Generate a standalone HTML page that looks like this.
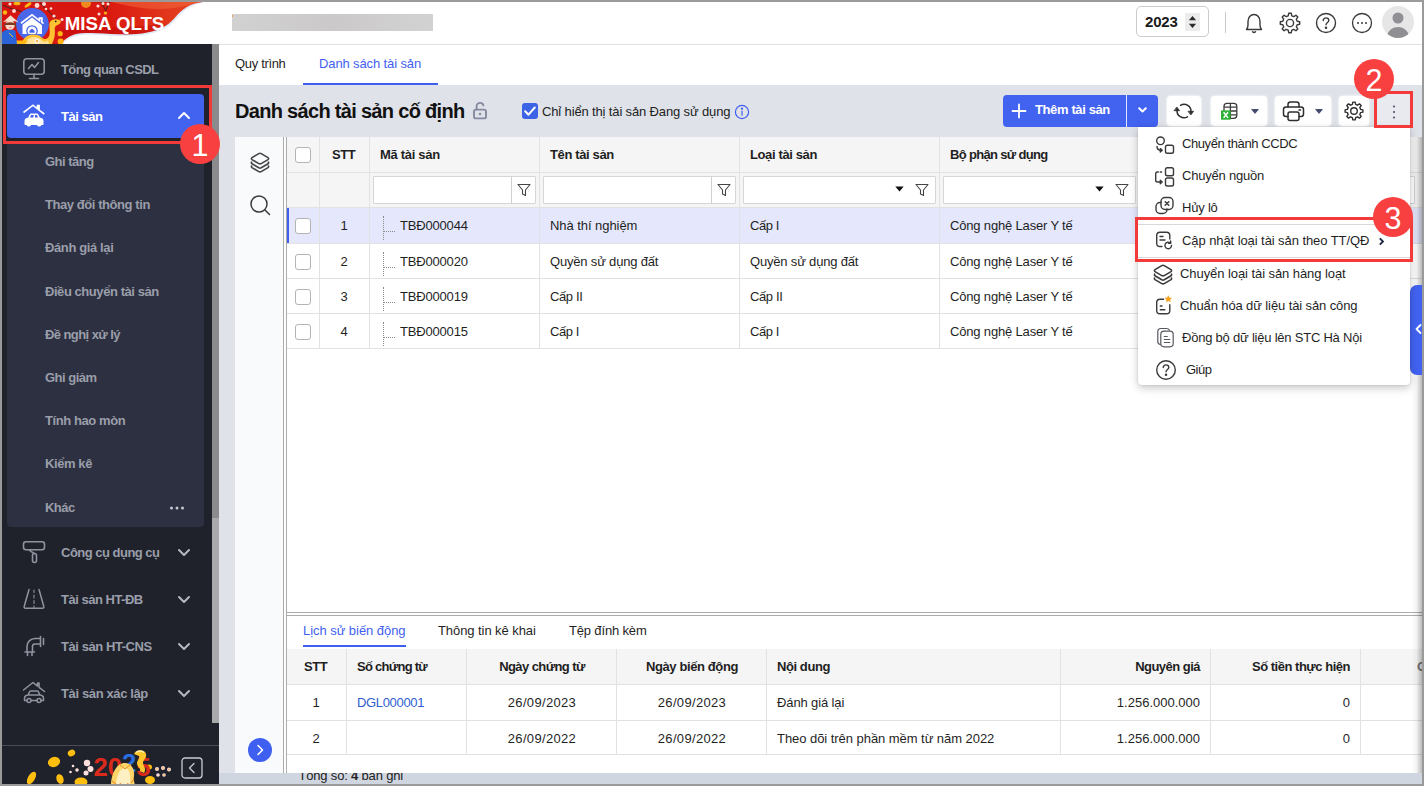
<!DOCTYPE html>
<html lang="vi">
<head>
<meta charset="utf-8">
<title>MISA QLTS - Danh sách tài sản</title>
<style>
*{box-sizing:border-box;margin:0;padding:0}
html,body{width:1424px;height:786px;overflow:hidden;background:#e0e2ea;font-family:"Liberation Sans",Arial,sans-serif;font-size:13px;color:#1f1f1f}
.abs,.a{position:absolute}
.a{white-space:nowrap}
svg{position:absolute;overflow:visible}
/* sidebar */
#side{position:absolute;left:0;top:44px;width:212px;height:742px;background:#1f222b}
#sbar{position:absolute;left:212px;top:44px;width:7px;height:742px;background:#1f222b}
#sbar i{position:absolute;left:0;top:0;width:7px;height:679px;background:linear-gradient(180deg,#8b8b8d 0,#8b8b8d 474px,#a9a9ab 474px,#a9a9ab 100%);display:block}
#logo{position:absolute;left:0;top:0;width:219px;height:44px;overflow:hidden;background:#fff}
.mi{position:absolute;margin-top:1px;left:61px;color:#9a9eaa;font-weight:bold;font-size:13px;white-space:nowrap;line-height:16px}
#sub{position:absolute;left:7px;top:141px;width:197px;height:386px;background:#2d3040;border-radius:0 0 4px 4px}
.si{position:absolute;margin-top:1px;left:45px;color:#9a9eaa;font-weight:bold;font-size:13px;white-space:nowrap;line-height:16px}
#active{position:absolute;left:7px;top:94px;width:197px;height:44px;background:#4262f0;border-radius:4px}
/* header */
#head{position:absolute;left:219px;top:0;width:1205px;height:45px;background:#fff;border-bottom:1px solid #e0e0e0}
#tabs{position:absolute;left:219px;top:45px;width:1205px;height:40px;background:#fff}

/* main */
.btn{position:absolute;top:96px;height:30px;background:#fff;border-radius:4px;box-shadow:0 0 2px 1px rgba(255,255,255,.55)}
.panel{position:absolute;background:#fff}
.hl{position:absolute;height:1px;background:#e2e2e2}
.vl{position:absolute;width:1px;background:#e2e2e2}
.th{position:absolute;font-weight:bold;font-size:13px;line-height:16px;white-space:nowrap;color:#1f1f1f}
.td{position:absolute;font-size:13px;line-height:16px;white-space:nowrap;color:#1f1f1f}
.cb{position:absolute;width:16px;height:16px;border:1px solid #b4b4b4;border-radius:3px;background:#fff}
.fi{position:absolute;top:176px;height:28px;border:1px solid #d6d6d6;border-radius:1px;background:#fff}
.td.g{margin-top:1px}
.dot-v{position:absolute;width:0;border-left:1px dotted #8a8a8a}
.dot-h{position:absolute;height:0;border-top:1px dotted #8a8a8a}

.mt{position:absolute;margin-top:1px;font-size:13px;line-height:16px;white-space:nowrap;color:#1f1f1f}
/* red marks */
.rbox{position:absolute;border:3px solid #f23a3a}
.badge{position:absolute;width:40px;height:40px;border-radius:50%;background:#f7403f;color:#fff;font-size:30.500px;text-align:center;line-height:43px}
#frame{position:absolute;left:0;top:0;width:1424px;height:786px;border:2px solid #9a9a9a;pointer-events:none}
</style>
</head>
<body>
<!-- HEADER -->
<div id="head">
  <div class="abs" style="left:13px;top:14px;width:201px;height:17px;background:linear-gradient(90deg,#d2d1d2,#cbc9ca 50%,#d3d2d3)"></div><div class="abs" style="left:13px;top:15px;width:1px;height:2px;background:#f0a040"></div>
</div>
<div id="tabs">
  <div class="a" style="left:16px;top:11px;font-size:13px;line-height:16px;letter-spacing:-0.33px">Quy trình</div>
  <div class="a" style="left:100px;top:11px;font-size:13px;line-height:16px;color:#3f5ff0;letter-spacing:-0.12px">Danh sách tài sản</div>
  <div class="abs" style="left:84px;top:38px;width:135px;height:2px;background:#3f5ff0"></div>
</div>

<div class="abs" style="left:1136px;top:6px;width:73px;height:31px;border:1px solid #cbcbcb;border-radius:5px;background:#fff"></div>
<div class="a" style="left:1145px;top:13px;font-size:15px;line-height:18px;font-weight:bold;color:#1a1a1a;letter-spacing:-.2px">2023</div>
<div class="abs" style="left:1185px;top:13px;width:15px;height:18px;background:#ececec"></div>
<svg style="left:1185px;top:13px" width="15" height="18" viewBox="0 0 15 18" fill="#2b2b2b"><path d="M7.500 3l3.600 4.200H3.900zM7.500 15l3.600-4.200H3.900z"/></svg>
<div class="abs" style="left:1225px;top:12px;width:1px;height:21px;background:#c9c9c9"></div>
<svg style="left:1243px;top:12px" width="22" height="22" viewBox="0 0 22 22" fill="none" stroke="#3a3a3a" stroke-width="1.400" stroke-linecap="round" stroke-linejoin="round"><path d="M3.500 17.500c1-1.300 1.500-2.800 1.500-4.500V9.500C5 5.500 7.500 2.500 11 2.500s6 3 6 7V13c0 1.700.5 3.200 1.500 4.500zM9.500 19.800c.8.700 2.200.7 3 0"/></svg>
<svg style="left:1278px;top:11px" width="24" height="24" viewBox="0 0 24 24" fill="none" stroke="#3a3a3a" stroke-width="1.400" stroke-linejoin="round"><path d="M10.22 4.82L10.70 2.29L13.30 2.29L13.78 4.82L15.82 5.66L17.95 4.21L19.79 6.05L18.34 8.18L19.18 10.22L21.71 10.70L21.71 13.30L19.18 13.78L18.34 15.82L19.79 17.95L17.95 19.79L15.82 18.34L13.78 19.18L13.30 21.71L10.70 21.71L10.22 19.18L8.18 18.34L6.05 19.79L4.21 17.95L5.66 15.82L4.82 13.78L2.29 13.30L2.29 10.70L4.82 10.22L5.66 8.18L4.21 6.05L6.05 4.21L8.18 5.66z"/><circle cx="12" cy="12" r="3.600"/></svg>
<svg style="left:1315px;top:12px" width="22" height="22" viewBox="0 0 22 22" fill="none" stroke="#3a3a3a" stroke-width="1.400" stroke-linecap="round"><circle cx="11" cy="11" r="9.500"/><path d="M8.200 8.600c0-1.600 1.200-2.700 2.800-2.700s2.800 1.100 2.800 2.500c0 2-2.800 2.100-2.800 4.300"/><circle cx="11" cy="15.800" r=".6" fill="#3a3a3a"/></svg>
<svg style="left:1351px;top:12px" width="22" height="22" viewBox="0 0 22 22" fill="none" stroke="#3a3a3a" stroke-width="1.300"><circle cx="11" cy="11" r="9.500"/><g fill="#3a3a3a" stroke="none"><circle cx="7" cy="11" r="1"/><circle cx="11" cy="11" r="1"/><circle cx="15" cy="11" r="1"/></g></svg>
<svg style="left:1382px;top:6px" width="32" height="32" viewBox="0 0 32 32"><defs><clipPath id="av"><circle cx="16" cy="16" r="16"/></clipPath></defs><circle cx="16" cy="16" r="16" fill="#e6e6e6"/><g clip-path="url(#av)" fill="#8f8f94"><circle cx="16" cy="12" r="5.500"/><path d="M5 32c0-7 5-11 11-11s11 4 11 11z"/></g></svg>

<!-- SIDEBAR -->
<div id="logo"><svg style="left:0;top:0" width="219" height="44" viewBox="0 0 219 44">
<defs><linearGradient id="lg" x1="0" y1="0" x2="1" y2="0"><stop offset="0" stop-color="#d41410"/><stop offset=".5" stop-color="#da1a10"/><stop offset=".8" stop-color="#e23a1e"/><stop offset="1" stop-color="#ec5030"/></linearGradient></defs>
<rect width="219" height="44" fill="url(#lg)"/>
<path d="M60 30C80 26 120 30 160 24L170 25 150 36 60 38z" fill="#c20d0c" opacity=".55"/>
<path d="M112 2C135 8 160 12 185 6L200 2z" fill="#f2683c" opacity=".55"/>
<path d="M60.500 44C65 39 71 34 81 33.200C95 32.300 105 33.600 118 34.300C130 34.800 140 34 146 32.800C156 31 163 28 169 23.500C175 18.500 179 12 185 8.300C190 5 195 3 203 2L219 2V44z" fill="#dfeaf8"/>
<path d="M62.500 44C66.500 40 72.500 35.800 82 34.900C95 34.100 105 35.300 118 36C130 36.500 140 35.800 146 34.500C156 32.800 164 29.800 170 25.300C176 20.300 180 13.500 186 9.800C191 6.300 196 3.800 205 2L219 2V44z" fill="#fff"/>
<path d="M3 5C9 9 16 9 22 12M40 3C46 8 50 14 56 18M101 2l5 9M109.500 2l-4 9" stroke="#3a2320" stroke-width=".9" fill="none"/>
<g fill="#ffd9d2"><circle cx="10" cy="4" r="1.600"/><circle cx="14" cy="11" r="2"/><circle cx="37" cy="5.500" r="2.400"/><circle cx="44" cy="4" r="2"/><circle cx="46" cy="9" r="1.300"/><circle cx="51" cy="8.500" r="1.300"/><circle cx="54" cy="16" r="1.600"/><circle cx="62" cy="19.500" r="1.500"/><circle cx="98" cy="6" r="1.600"/><circle cx="103" cy="3.500" r="1.500"/><circle cx="108" cy="4" r="1.500"/><circle cx="99" cy="14" r="1.500"/></g>
<g fill="#ffb413"><ellipse cx="17" cy="3.500" rx="3.500" ry="1.800"/><ellipse cx="28" cy="5" rx="4" ry="1.500" transform="rotate(-35 28 5)"/><circle cx="5" cy="12.500" r="2.200"/><circle cx="105.500" cy="13" r="1.600"/><circle cx="60.200" cy="33.700" r="2.600"/><circle cx="60.600" cy="41.500" r="3"/><circle cx="22" cy="31.500" r="1.400"/></g>
<circle cx="86" cy="3" r="5" fill="#f08a1c"/>
<circle cx="32.400" cy="24.300" r="16.400" fill="#4967e8"/>
<path d="M21 23.300L32 14.900l7.500 5.700v-2.400h2.400v4.200l1.600 1.200" fill="none" stroke="#fff" stroke-width="1.700"/>
<path d="M22.500 24.800L32 17.600l10 7.600V34h-19.500z" fill="#fff"/>
<circle cx="32" cy="31" r="5.200" fill="none" stroke="#4967e8" stroke-width="1.300"/>
<path d="M32 28.400l2.600 2.400v2h-5.200v-2z" fill="#4967e8"/>
<!-- snake -->
<path d="M23 40C27 34 36 33 41 37C44 40 48 40 49.500 35C50.500 30 48.500 25 50 22C51.500 19 56 18.500 59.500 20C61.500 21 61 23.500 58.500 24.500C56 25.500 54.500 26.500 54.800 30C55 34 55 38 52 44H22z" fill="#ffc233"/>
<path d="M26 41C30 36 37 36 41 39.500C43 42 46 42.500 48 40L49 44H25z" fill="#ffe29a"/>
<circle cx="55.700" cy="21.300" r=".9" fill="#1a1a1a"/>
<path d="M11 40.500L28 40.500 25 44 13.500 44z" fill="#ffb90f"/>
<circle cx="37" cy="41" r="2.600" fill="#fff1e0"/><circle cx="37" cy="41" r="1" fill="#f59a1b"/>
<!-- girl -->
<path d="M2 33C4 29 12 28.500 15.500 31L17 44H2z" fill="#2b63d9"/>
<path d="M9 33l4 4" stroke="#f4c11a" stroke-width="1"/>
<circle cx="10" cy="25" r="4.800" fill="#ffd9c6"/>
<path d="M4.200 24.500C5 21.500 15 21.500 16 24.500L16.500 29 14.500 25 5.500 25 4 29z" fill="#7a3b22"/>
<path d="M3 22.200L10.500 15.200l8 7C14 20.600 7 20.800 3 22.200z" fill="#f6dfce"/>
<path d="M8.800 27.300c1 .9 2.200.9 3.200 0z" fill="#e04545"/>
<text x="64.800" y="29.600" font-family="Liberation Sans, Arial, sans-serif" font-weight="bold" font-size="18.500" fill="#fff" textLength="99.500" lengthAdjust="spacingAndGlyphs">MISA QLTS</text>
</svg></div>
<div id="side"></div>
<div id="sbar"><i></i></div>
<div id="sub"></div>
<div id="active"></div>

<!-- Tổng quan -->
<svg style="left:22px;top:57px" width="24" height="24" viewBox="0 0 24 24" fill="none" stroke="#8f939d" stroke-width="1.6" stroke-linecap="round" stroke-linejoin="round"><rect x="1.8" y="1.8" width="20.4" height="15.4" rx="3"/><path d="M12 17.2v4M7.5 21.5h9M6.5 11.5l3.5-4 2.5 3 4-5"/></svg>
<div class="mi" style="top:61px;letter-spacing:-0.57px">Tổng quan CSDL</div>
<!-- active Tài sản -->
<svg style="left:22px;top:104px" width="24" height="24" viewBox="0 0 24 24"><path d="M1.5 8.5L11 1.2l4.5 3.6V1.6h1.6v4.5L22.3 10" fill="none" stroke="#fff" stroke-width="1.6" stroke-linejoin="miter"/><path d="M6.2 13.6l1.5-3.2c.3-.6.8-.9 1.500-.9h5.600c.7 0 1.200.3 1.500.9l1.500 3.200c2 .3 3.700 1.500 3.700 3.300v3c0 .6-.4 1-1 1h-1.100a2.300 2.300 0 0 1-4.400 0H9a2.300 2.300 0 0 1-4.400 0H3.500c-.6 0-1-.4-1-1v-3c0-1.800 1.700-3 3.700-3.300zM9 11l-1 2.400h3.500V11zm4 0v2.400h3L15 11z" fill="#fff" fill-rule="evenodd"/></svg>
<div class="mi" style="top:108px;color:#fff;letter-spacing:-0.47px">Tài sản</div>
<svg style="left:177px;top:110px" width="14" height="10" viewBox="0 0 14 10" fill="none" stroke="#fff" stroke-width="2" stroke-linecap="round" stroke-linejoin="round"><path d="M2 8l5-5 5 5"/></svg>
<!-- sub items -->
<div class="si" style="top:153px;letter-spacing:-0.51px">Ghi tăng</div>
<div class="si" style="top:196px;letter-spacing:-0.43px">Thay đổi thông tin</div>
<div class="si" style="top:239px;letter-spacing:-0.38px">Đánh giá lại</div>
<div class="si" style="top:283px;letter-spacing:-0.44px">Điều chuyển tài sản</div>
<div class="si" style="top:326px;letter-spacing:-0.58px">Đề nghị xử lý</div>
<div class="si" style="top:369px;letter-spacing:-0.5px">Ghi giảm</div>
<div class="si" style="top:412px;letter-spacing:-0.42px">Tính hao mòn</div>
<div class="si" style="top:455px;letter-spacing:-0.41px">Kiểm kê</div>
<div class="si" style="top:499px;letter-spacing:-0.52px">Khác</div>
<svg style="left:169px;top:506px" width="16" height="4" viewBox="0 0 16 4" fill="#c5c8d2"><circle cx="2.5" cy="2" r="1.5"/><circle cx="8" cy="2" r="1.5"/><circle cx="13.5" cy="2" r="1.500"/></svg>
<!-- other menus -->
<svg style="left:22px;top:540px" width="24" height="24" viewBox="0 0 24 24" fill="none" stroke="#8f939d" stroke-width="1.600" stroke-linecap="round" stroke-linejoin="round"><rect x="1.500" y="1.800" width="21" height="8" rx="2.500"/><path d="M7 9.800c1.500 1.500 3 2.500 5 3.500"/><rect x="10.500" y="13.500" width="4" height="9" rx="2"/></svg>
<div class="mi" style="top:544px;letter-spacing:-0.51px">Công cụ dụng cụ</div>
<svg style="left:22px;top:587px" width="24" height="24" viewBox="0 0 24 24" fill="none" stroke="#8f939d" stroke-width="1.500" stroke-linecap="round" stroke-linejoin="round"><path d="M7 2.500L2.200 19.500c-.3 1 .3 1.800 1.300 1.800h17c1 0 1.600-.8 1.300-1.800L17 2.500"/><path d="M12 3v2.500M12 8v3M12 13.500v3M12 19v1.500" stroke-width="1.100"/></svg>
<div class="mi" style="top:591px;letter-spacing:-0.49px">Tài sản HT-ĐB</div>
<svg style="left:22px;top:634px" width="24" height="24" viewBox="0 0 24 24" fill="none" stroke="#8f939d" stroke-width="1.600" stroke-linecap="round" stroke-linejoin="round"><path d="M18.500 4.500h-5.500c-4.500 0-8 3.500-8 8v5.500h5.500v-5.500c0-1.500 1-2.500 2.500-2.500h5.500zM18.500 2.500v10M21.500 4.500v6M3 18h9.500M5.500 18v3.500M10 18v3.500"/></svg>
<div class="mi" style="top:638px;letter-spacing:-0.43px">Tài sản HT-CNS</div>
<svg style="left:22px;top:681px" width="24" height="24" viewBox="0 0 24 24" fill="none" stroke="#8f939d" stroke-width="1.500" stroke-linecap="round" stroke-linejoin="round"><path d="M1.500 9L11 1.500l4.500 3.600V2h1.600v4.400L22.500 10.500"/><path d="M6 14l1.700-3.300c.3-.5.700-.7 1.200-.7h6.200c.5 0 .9.200 1.200.7L18 14c2 .3 3.500 1.300 3.500 3v2.500h-2.300M4.800 19.500H2.500V17c0-1.700 1.500-2.700 3.500-3h12M9.200 19.500h5.600"/><circle cx="7" cy="19.500" r="2"/><circle cx="17" cy="19.500" r="2"/></svg>
<div class="mi" style="top:685px;letter-spacing:-0.37px">Tài sản xác lập</div>
<svg style="left:177px;top:548px" width="14" height="10" viewBox="0 0 14 10" fill="none" stroke="#b5b8c2" stroke-width="2" stroke-linecap="round" stroke-linejoin="round"><path d="M2 2l5 5 5-5"/></svg>
<svg style="left:177px;top:595px" width="14" height="10" viewBox="0 0 14 10" fill="none" stroke="#b5b8c2" stroke-width="2" stroke-linecap="round" stroke-linejoin="round"><path d="M2 2l5 5 5-5"/></svg>
<svg style="left:177px;top:642px" width="14" height="10" viewBox="0 0 14 10" fill="none" stroke="#b5b8c2" stroke-width="2" stroke-linecap="round" stroke-linejoin="round"><path d="M2 2l5 5 5-5"/></svg>
<svg style="left:177px;top:689px" width="14" height="10" viewBox="0 0 14 10" fill="none" stroke="#b5b8c2" stroke-width="2" stroke-linecap="round" stroke-linejoin="round"><path d="M2 2l5 5 5-5"/></svg>
<!-- sidebar footer -->
<div class="abs" style="left:2px;top:745px;width:217px;height:1px;background:#4a4d58"></div>
<svg style="left:0;top:746px" width="212" height="40" viewBox="0 746 212 40">
<g fill="#ffbe0d"><ellipse cx="54" cy="762" rx="6.200" ry="5" transform="rotate(-20 54 762)"/><ellipse cx="71.500" cy="753" rx="3.800" ry="3.200" transform="rotate(-30 71.500 753)"/><ellipse cx="31.500" cy="778" rx="3.500" ry="7" transform="rotate(30 31.500 778)"/><ellipse cx="60" cy="779" rx="3.500" ry="5" transform="rotate(-20 60 779)"/><ellipse cx="81" cy="782" rx="6.500" ry="4.500"/><ellipse cx="150" cy="780" rx="5" ry="4"/><ellipse cx="149" cy="767" rx="3" ry="2.500"/></g>
<g fill="#ffe0dd"><circle cx="87" cy="763" r="3.200"/><circle cx="90.500" cy="769" r="3"/><circle cx="86" cy="773" r="2.500"/><circle cx="77" cy="770" r="1.800"/><circle cx="73" cy="766" r="1.300"/><circle cx="70.500" cy="772" r="1.300"/><circle cx="157" cy="769" r="2"/><circle cx="163" cy="768" r="2"/><circle cx="169" cy="769.500" r="2"/><circle cx="158" cy="775" r="1.800"/><circle cx="164" cy="775" r="1.800"/></g>
<g fill="#f0a51a"><circle cx="157" cy="769" r=".8"/><circle cx="163" cy="768" r=".8"/><circle cx="169" cy="769.500" r=".8"/><circle cx="164" cy="775" r=".8"/></g>
<text x="93.500" y="776" font-family="Liberation Sans, Arial, sans-serif" font-weight="bold" font-size="25" textLength="57" lengthAdjust="spacingAndGlyphs"><tspan fill="#d92a1c">20</tspan><tspan fill="#2a6de0" dy="-4">2</tspan><tspan fill="#d92a1c" dy="4">5</tspan></text>
<path d="M111 786C111 773 117 763 125 763C131 763 135 769 134 776C133 780 135 783 135 786z" fill="#ffd56a"/><path d="M116 786C116 776 120 768 125 768C129 768 131 774 130 786z" fill="#fff0c4"/><path d="M112 781l4 3M134 779l-3 4M120 783l2 3M128 783l-1 3" stroke="#ef7d1a" stroke-width="1" fill="none"/>
<path d="M119 764l6 5 6-5" stroke="#e08a1a" stroke-width="1" fill="none"/>
<path d="M134 754c2-5 11-5 12 0c1 4-3 6-3 9c0 3 4 5 1 10l-4-2c1-3-3-4-3-8c0-3 3-4 2-7z" fill="#ffc72e"/>
<path d="M136 752.500c2-2 6-2 8 0" stroke="#fff0b0" stroke-width="1.500" fill="none"/>
</svg>
<svg style="left:181px;top:757px" width="22" height="22" viewBox="0 0 22 22" fill="none" stroke="#c9ccd4" stroke-width="1.300" stroke-linecap="round" stroke-linejoin="round"><rect x="1" y="1" width="20" height="20" rx="3"/><path d="M13 6.500L8.500 11l4.500 4.500"/></svg>


<!-- title row -->
<div class="a" style="left:235px;top:98px;font-size:20px;line-height:26px;font-weight:bold;color:#111;letter-spacing:-0.69px">Danh sách tài sản cố định</div>
<svg style="left:472px;top:101px" width="16" height="19" viewBox="0 0 16 19" fill="none" stroke="#858a9e" stroke-width="1.900" stroke-linecap="round"><rect x="2" y="8.600" width="12" height="8.800" rx="2"/><path d="M4.600 8.500V5.400c0-2 1.500-3.500 3.400-3.500 1.700 0 3 1 3.400 2.500"/><circle cx="8" cy="13" r=".7" fill="#858a9e" stroke-width="1.200"/></svg>
<div class="abs" style="left:522px;top:103px;width:16px;height:16px;border-radius:3px;background:#3b63e6"></div>
<svg style="left:522px;top:103px" width="16" height="16" viewBox="0 0 16 16" fill="none" stroke="#fff" stroke-width="2" stroke-linecap="round" stroke-linejoin="round"><path d="M3.200 8.300l3.300 3.400 6.300-7.200"/></svg>
<div class="a" style="left:542px;top:104px;font-size:13px;line-height:16px;color:#222;letter-spacing:-0.14px">Chỉ hiển thị tài sản Đang sử dụng</div>
<svg style="left:734px;top:104px" width="16" height="16" viewBox="0 0 16 16" fill="none" stroke="#3f5ff0" stroke-width="1.200"><circle cx="8" cy="8" r="6.600"/><path d="M8 7v4.200" stroke-linecap="round"/><circle cx="8" cy="4.700" r=".5" fill="#3f5ff0"/></svg>
<!-- toolbar -->
<div class="abs" style="left:1003px;top:95px;width:155px;height:32px;background:#4262f0;border-radius:4px"></div>
<div class="abs" style="left:1126px;top:95px;width:1px;height:32px;background:#dfe5ff"></div>
<svg style="left:1011px;top:103px" width="16" height="16" viewBox="0 0 16 16" stroke="#fff" stroke-width="1.800" stroke-linecap="round"><path d="M8 1.500v13M1.500 8h13"/></svg>
<div class="a" style="left:1035px;top:102px;font-size:13px;line-height:16px;font-weight:bold;color:#fff;letter-spacing:-0.38px">Thêm tài sản</div>
<svg style="left:1138px;top:107px" width="9" height="6" viewBox="0 0 9 6" fill="none" stroke="#fff" stroke-width="2" stroke-linecap="round" stroke-linejoin="round"><path d="M1.200 1.200l3.300 3.300 3.300-3.300"/></svg>
<div class="btn" style="left:1167px;width:34px"></div>
<svg style="left:1173px;top:100px" width="22" height="22" viewBox="0 0 22 22" fill="none" stroke="#2e2e2e" stroke-width="1.500" stroke-linecap="round" stroke-linejoin="round"><path d="M7.500 5.300A7 7 0 0 1 18 11.800"/><path d="M4 10.200A7 7 0 0 0 14.500 16.800"/><path d="M15.400 11.300h5.200L18 14.700zM1.400 10.700h5.200L4 7.300z" fill="#2e2e2e" stroke-width=".8"/></svg>
<div class="btn" style="left:1211px;width:56px"></div>
<svg style="left:1219px;top:100px" width="22" height="22" viewBox="1219 100 22 22" fill="none" stroke="#3c3c3c" stroke-width="1.300" stroke-linejoin="round"><rect x="1224" y="103.300" width="12.800" height="15" rx="3"/><path d="M1224 107.200h12.800M1230.400 111h6.400M1230.400 114.800h6.400M1230.400 103.300v15"/><rect x="1221" y="110.400" width="9.600" height="9.300" fill="#2eb135" stroke="none"/><path d="M1223.600 112.300l4.400 5.600M1228 112.300l-4.400 5.600" stroke="#fff" stroke-width="1.500"/></svg>
<svg style="left:1250.5px;top:109px" width="8" height="5" viewBox="0 0 8 5" fill="#454d6e"><path d="M.6 0h6.800c.4 0 .5.400.3.600L4.400 4.600c-.2.200-.6.200-.8 0L.3.600C.1.400.2 0 .6 0z"/></svg>
<div class="btn" style="left:1275px;width:56px"></div>
<svg style="left:1282px;top:100px" width="23" height="22" viewBox="0 0 23 22" fill="none" stroke="#2e2e2e" stroke-width="1.500" stroke-linejoin="round" stroke-linecap="round"><path d="M6 7V4.500c0-1.400 1.100-2.500 2.500-2.500h6C15.900 2 17 3.100 17 4.500V7"/><path d="M6 16.500H4c-1.400 0-2.500-1.100-2.500-2.500V9.500C1.500 8.100 2.600 7 4 7h15c1.400 0 2.500 1.100 2.500 2.500V14c0 1.400-1.100 2.500-2.500 2.500h-2"/><rect x="6" y="12" width="11" height="8.500" rx="2"/><path d="M17 10h1.500"/></svg>
<svg style="left:1314.5px;top:109px" width="8" height="5" viewBox="0 0 8 5" fill="#454d6e"><path d="M.6 0h6.800c.4 0 .5.400.3.600L4.400 4.600c-.2.200-.6.200-.8 0L.3.600C.1.400.2 0 .6 0z"/></svg>
<div class="btn" style="left:1339px;width:30px"></div>
<svg style="left:1343px;top:100px" width="22" height="22" viewBox="0 0 24 24" fill="none" stroke="#2e2e2e" stroke-width="1.500" stroke-linejoin="round"><path d="M10.22 4.82L10.70 2.29L13.30 2.29L13.78 4.82L15.82 5.66L17.95 4.21L19.79 6.05L18.34 8.18L19.18 10.22L21.71 10.70L21.71 13.30L19.18 13.78L18.34 15.82L19.79 17.95L17.95 19.79L15.82 18.34L13.78 19.18L13.30 21.71L10.70 21.71L10.22 19.18L8.18 18.34L6.05 19.79L4.21 17.95L5.66 15.82L4.82 13.78L2.29 13.30L2.29 10.70L4.82 10.22L5.66 8.18L4.21 6.05L6.05 4.21L8.18 5.66z"/><circle cx="12" cy="12" r="3.600"/></svg>
<div class="abs" style="left:1377px;top:94px;width:34px;height:33px;background:#e9eaef"></div>
<svg style="left:1392px;top:104.500px" width="4" height="14" viewBox="0 0 4 14" fill="#3d4466"><circle cx="2" cy="1.500" r="1"/><circle cx="2" cy="7" r="1"/><circle cx="2" cy="12.500" r="1"/></svg>
<!-- left icon panel -->
<div class="panel" style="left:235px;top:137px;width:48px;height:636px;background:#f9fafc"></div>
<div class="abs" style="left:283px;top:137px;width:4px;height:636px;background:#fdfdfe;border-left:1px solid #acacac;border-right:1px solid #acacac"></div>
<svg style="left:249px;top:150px" width="22" height="24" viewBox="0 0 22 24" fill="none" stroke="#444" stroke-width="1.600" stroke-linejoin="round" stroke-linecap="round"><path d="M9.800 3.600L3 7.600c-.8.500-.8 1.500 0 2l6.800 4c.8.400 1.600.4 2.400 0l6.800-4c.8-.5.800-1.500 0-2l-6.800-4c-.8-.4-1.600-.4-2.400 0z"/><path d="M2.600 12.200c-.4.600-.2 1.200.4 1.600l6.800 4c.8.400 1.600.4 2.400 0l6.800-4c.6-.4.800-1 .4-1.600"/><path d="M2.600 16c-.4.600-.2 1.200.4 1.600l6.800 4c.8.400 1.600.4 2.400 0l6.800-4c.6-.4.800-1 .4-1.600"/></svg>
<svg style="left:249px;top:194px" width="22" height="22" viewBox="0 0 22 22" fill="none" stroke="#3a3a3a" stroke-width="1.500" stroke-linecap="round"><circle cx="10" cy="10" r="8"/><path d="M16 16l4.500 4.500"/></svg>
<svg style="left:248px;top:738px" width="24" height="24" viewBox="0 0 24 24"><circle cx="12" cy="12" r="12" fill="#3f5ff0"/><path d="M10 7.500l4.500 4.500-4.500 4.500" fill="none" stroke="#fff" stroke-width="1.600" stroke-linecap="round" stroke-linejoin="round"/></svg>
<!-- grid -->
<div class="panel" style="left:287px;top:137px;width:1137px;height:475px"></div>
<div class="abs" style="left:287px;top:137px;width:1137px;height:71px;background:#f5f5f5"></div>
<div class="abs" style="left:287px;top:208px;width:1137px;height:35px;background:#e5e8fc"></div>
<div class="abs" style="left:287px;top:208px;width:2px;height:35px;background:#3f5ff0"></div>
<div class="hl" style="left:287px;top:172px;width:1137px"></div>
<div class="hl" style="left:287px;top:207px;width:1137px"></div>
<div class="hl" style="left:287px;top:243px;width:1137px"></div>
<div class="hl" style="left:287px;top:278px;width:1137px"></div>
<div class="hl" style="left:287px;top:313px;width:1137px"></div>
<div class="hl" style="left:287px;top:348px;width:1137px"></div>
<div class="vl" style="left:319px;top:137px;height:212px"></div>
<div class="vl" style="left:369px;top:137px;height:212px"></div>
<div class="vl" style="left:539px;top:137px;height:212px"></div>
<div class="vl" style="left:739px;top:137px;height:212px"></div>
<div class="vl" style="left:939px;top:137px;height:212px"></div>
<div class="vl" style="left:1139px;top:137px;height:212px"></div>
<div class="cb" style="left:295px;top:147px"></div>
<div class="th" style="left:332px;top:147px;letter-spacing:-0.45px">STT</div>
<div class="th" style="left:380px;top:147px;letter-spacing:-0.3px">Mã tài sản</div>
<div class="th" style="left:550px;top:147px;letter-spacing:-0.37px">Tên tài sản</div>
<div class="th" style="left:750px;top:147px;letter-spacing:-0.38px">Loại tài sản</div>
<div class="th" style="left:950px;top:147px;letter-spacing:-0.67px">Bộ phận sử dụng</div>
<div class="fi" style="left:373px;width:163px"></div><div class="vl" style="left:511px;top:177px;height:26px;background:#d0d0d0"></div><svg style="left:517px;top:183px" width="14" height="14" viewBox="0 0 14 14" fill="none" stroke="#444" stroke-width="1.100" stroke-linejoin="round"><path d="M1 1.500h12L8.500 7v5.500l-3-1.500V7z"/></svg>
<div class="fi" style="left:543px;width:193px"></div><div class="vl" style="left:711px;top:177px;height:26px;background:#d0d0d0"></div><svg style="left:717px;top:183px" width="14" height="14" viewBox="0 0 14 14" fill="none" stroke="#444" stroke-width="1.100" stroke-linejoin="round"><path d="M1 1.500h12L8.500 7v5.500l-3-1.500V7z"/></svg>
<div class="fi" style="left:743px;width:193px"></div><svg style="left:895px;top:186px" width="9" height="6" viewBox="0 0 9 6" fill="#111"><path d="M.3.500h8.400L4.500 5.500z"/></svg><svg style="left:915px;top:183px" width="14" height="14" viewBox="0 0 14 14" fill="none" stroke="#444" stroke-width="1.100" stroke-linejoin="round"><path d="M1 1.500h12L8.500 7v5.500l-3-1.500V7z"/></svg>
<div class="fi" style="left:943px;width:193px"></div><svg style="left:1095px;top:186px" width="9" height="6" viewBox="0 0 9 6" fill="#111"><path d="M.3.500h8.400L4.500 5.500z"/></svg><svg style="left:1115px;top:183px" width="14" height="14" viewBox="0 0 14 14" fill="none" stroke="#444" stroke-width="1.100" stroke-linejoin="round"><path d="M1 1.500h12L8.500 7v5.500l-3-1.500V7z"/></svg>
<div class="fi" style="left:1143px;width:272px"></div>
<div class="cb" style="left:295px;top:218px"></div><div class="td g" style="left:334px;width:20px;text-align:center;top:217px">1</div><div class="dot-v" style="left:383px;top:216px;height:24px"></div><div class="dot-h" style="left:384px;top:231px;width:11px"></div><div class="td g" style="left:400px;top:217px;letter-spacing:-0.18px">TBĐ000044</div><div class="td g" style="left:550px;top:217px;letter-spacing:-0.06px">Nhà thí nghiệm</div><div class="td g" style="left:750px;top:217px;letter-spacing:-0.4px">Cấp I</div><div class="td g" style="left:950px;top:217px;letter-spacing:-0.17px">Công nghệ Laser Y tế</div>
<div class="cb" style="left:295px;top:254px"></div><div class="td g" style="left:334px;width:20px;text-align:center;top:253px">2</div><div class="dot-v" style="left:383px;top:252px;height:24px"></div><div class="dot-h" style="left:384px;top:267px;width:11px"></div><div class="td g" style="left:400px;top:253px;letter-spacing:-0.18px">TBĐ000020</div><div class="td g" style="left:550px;top:253px;letter-spacing:-0.18px">Quyền sử dụng đất</div><div class="td g" style="left:750px;top:253px;letter-spacing:-0.18px">Quyền sử dụng đất</div><div class="td g" style="left:950px;top:253px;letter-spacing:-0.17px">Công nghệ Laser Y tế</div>
<div class="cb" style="left:295px;top:289px"></div><div class="td g" style="left:334px;width:20px;text-align:center;top:288px">3</div><div class="dot-v" style="left:383px;top:287px;height:24px"></div><div class="dot-h" style="left:384px;top:302px;width:11px"></div><div class="td g" style="left:400px;top:288px;letter-spacing:-0.18px">TBĐ000019</div><div class="td g" style="left:550px;top:288px;letter-spacing:-0.38px">Cấp II</div><div class="td g" style="left:750px;top:288px;letter-spacing:-0.38px">Cấp II</div><div class="td g" style="left:950px;top:288px;letter-spacing:-0.17px">Công nghệ Laser Y tế</div>
<div class="cb" style="left:295px;top:324px"></div><div class="td g" style="left:334px;width:20px;text-align:center;top:323px">4</div><div class="dot-v" style="left:383px;top:322px;height:24px"></div><div class="dot-h" style="left:384px;top:337px;width:11px"></div><div class="td g" style="left:400px;top:323px;letter-spacing:-0.18px">TBĐ000015</div><div class="td g" style="left:550px;top:323px;letter-spacing:-0.4px">Cấp I</div><div class="td g" style="left:750px;top:323px;letter-spacing:-0.4px">Cấp I</div><div class="td g" style="left:950px;top:323px;letter-spacing:-0.17px">Công nghệ Laser Y tế</div>


<!-- bottom panel -->
<div class="abs" style="left:287px;top:612px;width:1137px;height:4px;background:#fdfdfe;border-top:1px solid #acacac;border-bottom:1px solid #acacac"></div>
<div class="panel" style="left:287px;top:616px;width:1137px;height:157px"></div>
<div class="a" style="left:303px;top:623px;font-size:13px;line-height:16px;color:#3f5ff0;letter-spacing:-0.05px">Lịch sử biến động</div>
<div class="abs" style="left:303px;top:645px;width:103px;height:2px;background:#3f5ff0"></div>
<div class="a" style="left:438px;top:623px;font-size:13px;line-height:16px;letter-spacing:-0.07px">Thông tin kê khai</div>
<div class="a" style="left:569px;top:623px;font-size:13px;line-height:16px;letter-spacing:-0.16px">Tệp đính kèm</div>
<div class="abs" style="left:287px;top:649px;width:1137px;height:35px;background:#f5f5f5"></div>
<div class="hl" style="left:287px;top:684px;width:1137px"></div>
<div class="hl" style="left:287px;top:720px;width:1137px"></div>
<div class="hl" style="left:287px;top:754px;width:1137px"></div>
<div class="vl" style="left:346px;top:649px;height:105px"></div>
<div class="vl" style="left:466px;top:649px;height:105px"></div>
<div class="vl" style="left:616px;top:649px;height:105px"></div>
<div class="vl" style="left:766px;top:649px;height:105px"></div>
<div class="vl" style="left:1060px;top:649px;height:105px"></div>
<div class="vl" style="left:1210px;top:649px;height:105px"></div>
<div class="vl" style="left:1360px;top:649px;height:105px"></div>
<div class="th" style="left:304px;top:659px;letter-spacing:-0.42px">STT</div>
<div class="th" style="left:357px;top:659px;letter-spacing:-0.73px">Số chứng từ</div>
<div class="th" style="left:467px;width:150px;text-align:center;top:659px;letter-spacing:-0.58px">Ngày chứng từ</div>
<div class="th" style="left:617px;width:150px;text-align:center;top:659px;letter-spacing:-0.39px">Ngày biến động</div>
<div class="th" style="left:777px;top:659px;letter-spacing:-0.42px">Nội dung</div>
<div class="th" style="left:1061px;width:139px;text-align:right;top:659px;letter-spacing:-0.52px">Nguyên giá</div>
<div class="th" style="left:1211px;width:139px;text-align:right;top:659px;letter-spacing:-0.48px">Số tiền thực hiện</div>
<div class="th" style="left:1417px;top:659px;color:#777">C</div>
<div class="td" style="left:306px;width:20px;text-align:center;top:695px">1</div><div class="td" style="left:357px;top:695px;color:#2f5fd0;letter-spacing:-0.34px">DGL000001</div><div class="td" style="left:467px;width:150px;text-align:center;top:695px;letter-spacing:0.33px">26/09/2023</div><div class="td" style="left:617px;width:150px;text-align:center;top:695px;letter-spacing:0.33px">26/09/2023</div><div class="td" style="left:777px;top:695px;letter-spacing:-0.12px">Đánh giá lại</div><div class="td" style="left:1061px;width:139px;text-align:right;top:695px">1.256.000.000</div><div class="td" style="left:1211px;width:139px;text-align:right;top:695px">0</div>
<div class="td" style="left:306px;width:20px;text-align:center;top:731px">2</div><div class="td" style="left:467px;width:150px;text-align:center;top:731px;letter-spacing:0.33px">26/09/2022</div><div class="td" style="left:617px;width:150px;text-align:center;top:731px;letter-spacing:0.33px">26/09/2022</div><div class="td" style="left:777px;top:731px;letter-spacing:-0.05px">Theo dõi trên phần mềm từ năm 2022</div><div class="td" style="left:1061px;width:139px;text-align:right;top:731px">1.256.000.000</div><div class="td" style="left:1211px;width:139px;text-align:right;top:731px">0</div>
<div class="abs" style="left:219px;top:773px;width:1205px;height:13px;background:#d0d6e0;overflow:hidden"><div class="a" style="left:79.500px;top:-5px;font-size:13px;line-height:16px;color:#222;letter-spacing:-.18px">Tổng số: <b>4</b> bản ghi</div></div>
<div class="abs" style="left:1410px;top:137px;width:12px;height:636px;background:linear-gradient(90deg,rgba(0,0,0,0) 15%,rgba(0,0,0,.05) 55%,rgba(0,0,0,.27))"></div>
<div class="abs" style="left:1410px;top:285px;width:14px;height:90px;background:#4262f0;border-radius:7px 0 0 7px"></div>
<svg style="left:1414.500px;top:324px" width="7" height="10" viewBox="0 0 7 10" fill="none" stroke="#fff" stroke-width="1.800" stroke-linecap="round" stroke-linejoin="round"><path d="M5.500 1L1.500 5l4 4"/></svg>


<div class="abs" style="left:1138px;top:127px;width:272px;height:258px;background:#fff;border-radius:0 0 4px 4px;box-shadow:0 3px 8px rgba(0,0,0,.22),0 0 2px rgba(0,0,0,.15)"></div>
<div class="hl" style="left:1138px;top:224px;width:272px;background:#d9d9d9"></div>
<div class="hl" style="left:1138px;top:257px;width:272px;background:#d9d9d9"></div>
<div class="mt" style="left:1182px;top:135px;letter-spacing:-0.41px">Chuyển thành CCDC</div>
<div class="mt" style="left:1182px;top:167px;letter-spacing:-0.22px">Chuyển nguồn</div>
<div class="mt" style="left:1182px;top:199px;letter-spacing:-0.21px">Hủy lô</div>
<div class="mt" style="left:1182px;top:232px;letter-spacing:-0.08px">Cập nhật loại tài sản theo TT/QĐ</div>
<div class="mt" style="left:1180px;top:265px;letter-spacing:-0.07px">Chuyển loại tài sản hàng loạt</div>
<div class="mt" style="left:1180px;top:297px;letter-spacing:-0.11px">Chuẩn hóa dữ liệu tài sản công</div>
<div class="mt" style="left:1182px;top:329px;letter-spacing:-0.22px">Đồng bộ dữ liệu lên STC Hà Nội</div>
<div class="mt" style="left:1186px;top:361px;letter-spacing:-0.52px">Giúp</div>
<svg style="left:1378px;top:237px" width="7" height="9" viewBox="0 0 7 9" fill="none" stroke="#1b2340" stroke-width="1.800" stroke-linejoin="miter"><path d="M1.800 1.300L5 4.500 1.800 7.700"/></svg>
<!-- menu icons -->
<svg style="left:1154px;top:134px" width="22" height="22" viewBox="1154 134 22 22" fill="none" stroke="#3a3a3a" stroke-width="1.400" stroke-linecap="round" stroke-linejoin="round"><circle cx="1160.500" cy="140.800" r="3.800"/><rect x="1165.500" y="145.300" width="8" height="8" rx="1.800"/><path d="M1157 146.500c0 2.500 1.500 3.800 4.500 3.800"/><path d="M1160.300 148.600l1.900 1.700-1.900 1.700z" fill="#3a3a3a"/></svg>
<svg style="left:1154px;top:166px" width="22" height="22" viewBox="1154 166 22 22" fill="none" stroke="#3a3a3a" stroke-width="1.400" stroke-linecap="round" stroke-linejoin="round"><rect x="1165.500" y="167.800" width="8" height="8" rx="1.800"/><rect x="1165.500" y="178" width="8" height="8" rx="1.800"/><path d="M1161.500 172h-1.200M1158.300 172h-.8c-1 0-1.800.8-1.800 1.800v6.400c0 1 .8 1.800 1.800 1.800h3.200"/><path d="M1160.300 180.300l1.900 1.700-1.900 1.700z" fill="#3a3a3a"/></svg>
<svg style="left:1154px;top:196px" width="22" height="22" viewBox="1154 196 22 22" fill="none" stroke="#3a3a3a" stroke-width="1.400" stroke-linecap="round" stroke-linejoin="round"><rect x="1161" y="197.500" width="12" height="12" rx="4"/><path d="M1161 202.500h-1c-2.200 0-4 1.800-4 4v3c0 2.200 1.800 4 4 4h3c2.200 0 4-1.800 4-4v-.5"/><path d="M1165.200 201.700l3.600 3.600M1168.800 201.700l-3.600 3.600"/></svg>
<svg style="left:1154px;top:230px" width="22" height="22" viewBox="1154 230 22 22" fill="none" stroke="#3a3a3a" stroke-width="1.400" stroke-linecap="round" stroke-linejoin="round"><path d="M1162 246.500h-2c-1.900 0-3.300-1.400-3.300-3.300v-7.600c0-1.900 1.400-3.300 3.300-3.300h6.500c1.900 0 3.300 1.400 3.300 3.300v3.400"/><path d="M1160 236.500h3M1160 240h5"/><path d="M1171.500 245.500a3.300 3.300 0 1 1-1.200-2.600"/><path d="M1170.600 241l.2 2.200-2.200.2"/></svg>
<svg style="left:1152px;top:262px" width="22" height="24" viewBox="0 0 22 24" fill="none" stroke="#3a3a3a" stroke-width="1.600" stroke-linejoin="round" stroke-linecap="round"><path d="M9.800 3.600L3 7.600c-.8.500-.8 1.500 0 2l6.800 4c.8.400 1.600.4 2.400 0l6.800-4c.8-.5.800-1.500 0-2l-6.800-4c-.8-.4-1.600-.4-2.400 0z"/><path d="M2.600 12.200c-.4.600-.2 1.200.4 1.600l6.800 4c.8.400 1.600.4 2.400 0l6.800-4c.6-.4.800-1 .4-1.600"/><path d="M2.600 16c-.4.600-.2 1.200.4 1.600l6.800 4c.8.400 1.600.4 2.400 0l6.800-4c.6-.4.800-1 .4-1.600"/></svg>
<svg style="left:1154px;top:295px" width="22" height="22" viewBox="1154 295 22 22" fill="none" stroke="#3a3a3a" stroke-width="1.400" stroke-linecap="round" stroke-linejoin="round"><path d="M1163.500 299.200h-3.500c-1.900 0-3.300 1.400-3.300 3.300v8c0 1.900 1.400 3.300 3.300 3.300h6.500c1.900 0 3.300-1.400 3.300-3.300v-5.800"/><path d="M1160.300 306h1.700M1160.300 309.800h4.500"/><path d="M1168.300 295.200l1.100 2.400 2.600.3-1.900 1.800.5 2.600-2.300-1.300-2.300 1.300.5-2.600-1.900-1.800 2.600-.3z" fill="#f7a21b" stroke="none"/></svg>
<svg style="left:1154px;top:326px" width="22" height="22" viewBox="1154 326 22 22" fill="none" stroke="#55585f" stroke-width="1.200" stroke-linecap="round" stroke-linejoin="round"><path d="M1160.500 344.500c-1.600-.2-2.700-1.400-2.700-3.100v-9.800c0-1.800 1.300-3.100 3.100-3.100h5.600c1.300 0 2.300.6 2.800 1.600"/><rect x="1160.800" y="331.200" width="12.400" height="15.600" rx="3.200" fill="#fff"/><path d="M1164.300 336.500h3M1164.300 339.500h5.500M1164.300 342.500h5.500"/></svg>
<svg style="left:1155px;top:359px" width="22" height="22" viewBox="0 0 22 22" fill="none" stroke="#3a3a3a" stroke-width="1.400" stroke-linecap="round"><circle cx="11" cy="11" r="9.300"/><path d="M8.200 8.600c0-1.600 1.200-2.700 2.800-2.700s2.800 1.100 2.800 2.500c0 2-2.800 2.100-2.800 4.300"/><circle cx="11" cy="15.800" r=".6" fill="#3a3a3a"/></svg>


<div class="rbox" style="left:3px;top:85px;width:209px;height:59px"></div>
<div class="rbox" style="left:1374px;top:91px;width:39px;height:37px"></div>
<div class="rbox" style="left:1135px;top:217px;width:278px;height:45px"></div>
<div class="badge" style="left:180px;top:124px">1</div>
<div class="badge" style="left:1354px;top:59px">2</div>
<div class="badge" style="left:1373px;top:197px">3</div>

<div id="frame"></div>
</body>
</html>
